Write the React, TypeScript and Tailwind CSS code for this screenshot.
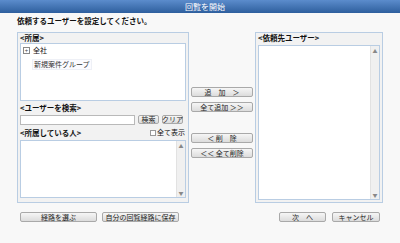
import React from 'react';

const font = { fontFamily: '"Noto Sans CJK JP", "DejaVu Sans", sans-serif' };

const Btn = ({ label, className = '' }: { label: string; className?: string }) => (
  <button
    className={`flex items-center justify-center whitespace-nowrap rounded-[2px] border border-[#a9a9a9] bg-gradient-to-b from-[#f6f6f6] to-[#dcdcdc] p-0 text-[7px] leading-none text-[#222] ${className}`}
  >
    {label}
  </button>
);

const ScrollList = ({ className = '' }: { className?: string }) => (
  <div className={`flex border border-[#b9cde3] bg-white ${className}`}>
    <div className="flex-1" />
    <div className="flex w-[9px] flex-col items-center justify-between border-l border-[#e2e2e2] bg-[#f0f0f0] py-[2px]">
      <span className="text-[5px] leading-none text-[#888]">▲</span>
      <span className="text-[5px] leading-none text-[#888]">▼</span>
    </div>
  </div>
);

export default function App() {
  return (
    <div className="h-[243px] w-[400px] overflow-hidden bg-[#f8f8f8] text-[#111]" style={font}>
      <div className="flex h-[13px] items-center justify-center bg-gradient-to-b from-[#5b8ccc] to-[#2e5f9e] pl-[10px] text-[8px] leading-none text-white">
        回覧を開始
      </div>
      <div className="h-[18px] pl-[17px] pt-[4px] text-[7.5px] font-bold leading-none">
        依頼するユーザーを設定してください。
      </div>

      <div className="flex px-[17px] pt-[1px]">
        {/* left panel */}
        <div className="flex h-[171px] w-[172px] flex-col border border-[#b9cde3] bg-[#f2f2f2] px-[2px]">
          <div className="h-[10px] pt-[1px] text-[7.5px] font-bold leading-none">&lt;所属&gt;</div>
          <div className="h-[58px] border border-[#b9cde3] bg-white px-[2px] pt-[3px] text-[7px] leading-none">
            <div className="flex items-center gap-[3px]">
              <span className="flex h-[7px] w-[7px] items-center justify-center border border-[#888] text-[6px] leading-none text-[#444]">
                +
              </span>
              <span>全社</span>
            </div>
            <div className="ml-[9px] mt-[5px] inline-block border border-[#eef0f6] bg-[#fbfbff] px-[1px] py-[1px] text-[#333]">
              新規案件グループ
            </div>
          </div>
          <div className="h-[13px] pt-[3px] text-[7.5px] font-bold leading-none">&lt;ユーザーを検索&gt;</div>
          <div className="flex h-[11px] items-center gap-[3px]">
            <div className="h-[10px] w-[115px] border border-[#b9b9b9] bg-white" />
            <Btn label="検索" className="h-[9px] w-[21px]" />
            <Btn label="クリア" className="h-[9px] w-[21px] text-[6.5px]" />
          </div>
          <div className="flex h-[15px] items-center justify-between">
            <span className="text-[7.5px] font-bold leading-none">&lt;所属している人&gt;</span>
            <span className="flex items-center gap-[1px] pr-[1px] text-[7px] leading-none">
              <span className="h-[6px] w-[6px] border border-[#999] bg-white" />
              全て表示
            </span>
          </div>
          <ScrollList className="h-[58px]" />
        </div>

        {/* middle buttons */}
        <div className="ml-[2px] flex w-[62px] flex-col gap-[5px] pt-[55px]">
          <Btn label="追　加　＞" className="h-[10px] w-full" />
          <Btn label="全て追加 ＞＞" className="h-[10px] w-full" />
          <div className="h-[11px]" />
          <Btn label="＜ 削　除" className="h-[10px] w-full" />
          <Btn label="＜＜ 全て削除" className="h-[10px] w-full" />
        </div>

        {/* right panel */}
        <div className="ml-[2px] flex h-[171px] w-[128px] flex-col border border-[#b9cde3] bg-[#f2f2f2] px-[2px] pb-[2px]">
          <div className="h-[12px] pt-[1px] text-[7.5px] font-bold leading-none">&lt;依頼先ユーザー&gt;</div>
          <ScrollList className="flex-1" />
        </div>
      </div>

      <div className="flex px-[20px] pt-[9px]">
        <Btn label="経路を選ぶ" className="h-[10px] w-[77px]" />
        <Btn label="自分の回覧経路に保存" className="ml-[5px] h-[10px] w-[77px]" />
        <div className="flex-1" />
        <Btn label="次　へ" className="h-[10px] w-[47px]" />
        <Btn label="キャンセル" className="ml-[6px] h-[10px] w-[48px]" />
      </div>
    </div>
  );
}
